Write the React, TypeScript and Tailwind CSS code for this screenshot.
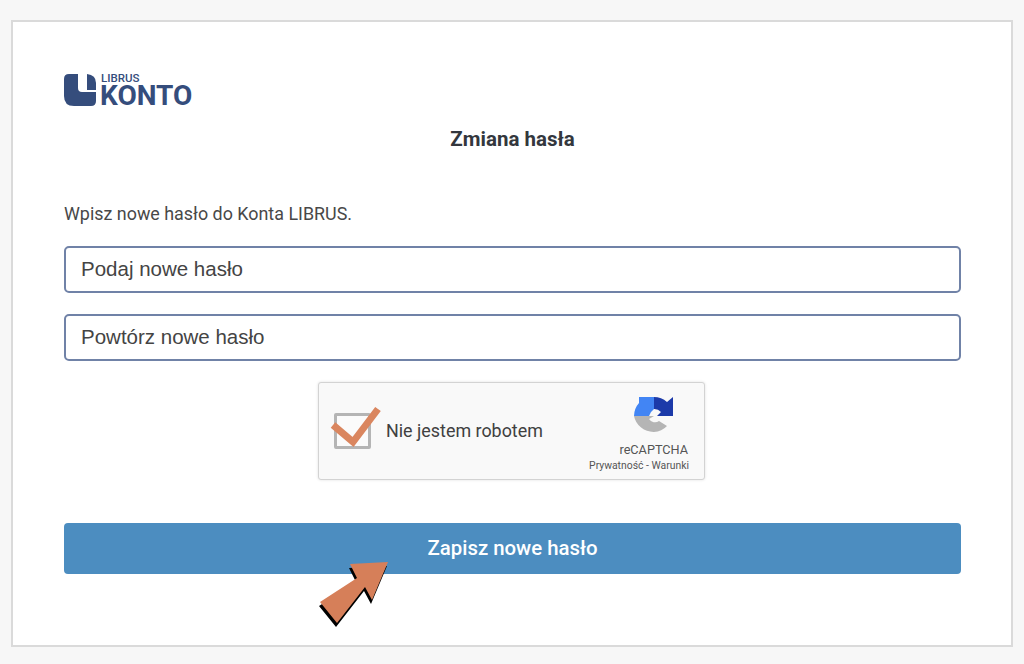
export default function App() {
  return (
    <div className="relative h-[664px] w-[1024px] overflow-hidden bg-[#f7f7f7] pl-[11px] pt-[20px] font-['Roboto',sans-serif] text-[#3b3b3b]">
      <div className="flex h-[627px] w-[1002px] flex-col border-2 border-[#dadada] bg-white pl-[51px] pr-[50px] pt-[50px]">
        <div className="flex h-[36px] items-center">
          <svg width="32" height="32" viewBox="0 0 32 32" className="shrink-0">
            <path d="M5 0 H14 V14 Q14 18 18 18 H32 V27 Q32 32 27 32 H10 Q0 32 0 22 V5 Q0 0 5 0 Z" fill="#354d7c" />
            <path d="M23 0 Q32 1 32 9 V16 H23 Z" fill="#354d7c" />
          </svg>
          <div className="ml-[4px] flex flex-col leading-none text-[#354d7c]">
            <span className="ml-[1px] text-[11.5px] font-medium leading-[11px]">LIBRUS</span>
            <span className="text-[28px] font-bold leading-[24px]">KONTO</span>
          </div>
        </div>
        <h1 className="mt-[19px] text-center text-[20.5px] font-bold leading-[24px] text-[#33373d]">Zmiana hasła</h1>
        <p className="mt-[51px] text-[17.9px] leading-[24px] text-[#484848]">Wpisz nowe hasło do Konta LIBRUS.</p>
        <input
          readOnly
          placeholder="Podaj nowe hasło"
          className="mt-[20px] h-[47px] w-full rounded-[5px] border-2 border-[#7082a7] px-[15px] pb-[2px] font-['Liberation_Sans',sans-serif] text-[20.5px] placeholder:text-[#444]"
        />
        <input
          readOnly
          placeholder="Powtórz nowe hasło"
          className="mt-[21px] h-[47px] w-full rounded-[5px] border-2 border-[#7082a7] px-[15px] pb-[2px] font-['Liberation_Sans',sans-serif] text-[20.5px] placeholder:text-[#444]"
        />
        <div className="ml-[254px] mt-[21px] flex h-[98px] w-[387px] items-center rounded-[3px] border border-[#d3d3d3] bg-[#f9f9f9] pl-[15px] pr-[15px] shadow-[0_0_3px_rgba(0,0,0,0.12)]">
          <div className="relative h-[36px] w-[37px] shrink-0 rounded-[2px] border-[3px] border-[#b5b5b5] bg-[#fbfbfb]">
            <svg width="1" height="1" className="absolute left-0 top-0 overflow-visible">
              <path d="M-4 9 L16 26 L41 -7" fill="none" stroke="#da865f" strokeWidth="7" />
            </svg>
          </div>
          <span className="ml-[15px] text-[17.9px] leading-[24px] text-[#404040]">Nie jestem robotem</span>
          <div className="ml-auto flex flex-col items-end">
            <svg width="48" height="48" viewBox="0 0 48 48" className="mr-[11px]">
              <path d="M24 5 A20 20 0 0 1 37 10 L43 5 V24 H27 L31 20 A9 9 0 0 0 24 17 Z" fill="#1c3aa9" />
              <path d="M9 5 H24 V17 L21 20 L19 24 H4 A20 20 0 0 1 9 11 Z" fill="#4285f4" />
              <path d="M4 24 H24 L19 27 A7 7 0 0 0 29 29 L37 34 A19 19 0 0 1 24 40 A20 20 0 0 1 4 24 Z" fill="#b5b5b5" />
            </svg>
            <span className="mr-[1px] mt-[3px] text-[12.7px] leading-[14px] text-[#555]">reCAPTCHA</span>
            <span className="mt-[4px] whitespace-nowrap text-[10.4px] leading-[10px] text-[#555]">Prywatność - Warunki</span>
          </div>
        </div>
        <button className="mt-[43px] h-[51px] w-full rounded-[4px] bg-[#4c8dc0] text-[20.4px] font-medium text-white">Zapisz nowe hasło</button>
      </div>
      <svg width="100" height="90" viewBox="300 550 100 90" className="absolute left-[300px] top-[550px]">
        <path d="M388 562 L350 564 L357 578 L320 602 L337 623 L365 587 L372 600 Z" fill="#000" transform="translate(-1 4)" />
        <path d="M388 562 L350 564 L357 578 L320 602 L337 623 L365 587 L372 600 Z" fill="#d67f59" />
      </svg>
    </div>
  );
}
